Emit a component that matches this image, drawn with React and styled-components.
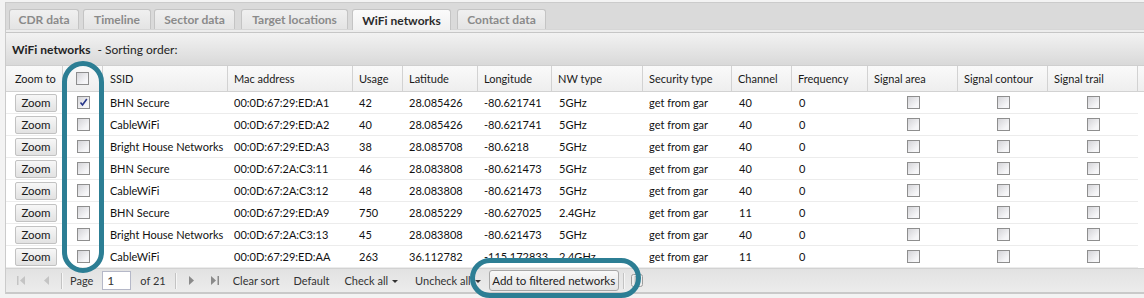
import React from 'react';
import styled, { createGlobalStyle } from 'styled-components';

const GlobalStyle = createGlobalStyle`
  html, body {
    margin: 0;
    padding: 0;
    background: #ffffff;
  }

  body {
    font-family: Lato, "Liberation Sans", sans-serif;
    font-size: 11px;
    color: #111;
  }
`;

const COLUMNS = '57px 40px 125px 125px 50px 75px 74px 91px 89px 60px 76px 90px 90px 90px';

const Page = styled.div`
  position: relative;
  width: 1144px;
  height: 298px;
  overflow: hidden;
  background: #f3f3f3;
`;

const Panel = styled.div`
  margin: 2px 0 0 5px;
  border-top: 1px solid #cbcbcb;
  border-left: 1px solid #cbcbcb;
  background: #ffffff;
`;

const TabBar = styled.div`
  display: flex;
  align-items: flex-end;
  height: 26px;
  background: #dadada;
`;

const Tab = styled.div`
  display: flex;
  align-items: center;
  justify-content: center;
  box-sizing: border-box;
  width: ${ (p) => p.w }px;
  height: ${ (p) => (p.active ? 21 : 20) }px;
  margin-left: ${ (p) => p.gap }px;
  margin-bottom: ${ (p) => (p.active ? -1 : 0) }px;
  border: 1px solid #c4c4c4;
  border-bottom: none;
  border-radius: 3px 3px 0 0;
  background: ${ (p) => (p.active
    ? 'linear-gradient(#fbfbfb, #f1f1f1)'
    : 'linear-gradient(#f0f0f0, #e4e4e4)') };
  color: ${ (p) => (p.active ? '#2b2b2b' : '#8a8a8a') };
  font-weight: 700;
  font-size: 12px;
  white-space: nowrap;
  position: relative;
  z-index: 1;
`;

const TabStrip = styled.div`
  height: 2px;
  background: #ededed;
  border-top: 1px solid #d6d6d6;
  border-bottom: 1px solid #c6c6c6;
`;

const TitleBar = styled.div`
  display: flex;
  align-items: center;
  height: 32px;
  padding-left: 6px;
  background: linear-gradient(#f2f2f2, #d9d9d9);
  border-bottom: 1px solid #cfcfcf;
  color: #222;
  font-size: 12px;

  b {
    margin-right: 7px;
  }
`;

const Row = styled.div`
  display: grid;
  grid-template-columns: ${ COLUMNS } 1fr;
  height: ${ (p) => p.height }px;
  box-sizing: border-box;
`;

const HeaderRow = styled(Row)`
  background: linear-gradient(#fafafa, #eeeeee);
  border-bottom: 1px solid #d2d2d2;
`;

const HeadCell = styled.div`
  display: flex;
  align-items: center;
  justify-content: ${ (p) => (p.center ? 'center' : 'flex-start') };
  padding-left: ${ (p) => (p.center ? 0 : p.pad ?? 6) }px;
  border-right: ${ (p) => (p.last ? 'none' : '1px solid #d2d2d2') };
  color: #1a1a1a;
  white-space: nowrap;
  overflow: hidden;
`;

const BodyRow = styled(Row)`
  background: #ffffff;
`;

const Cell = styled.div`
  display: flex;
  align-items: center;
  justify-content: ${ (p) => (p.center ? 'center' : 'flex-start') };
  padding-left: ${ (p) => (p.center ? 0 : p.pad ?? 7) }px;
  border-bottom: ${ (p) => (p.filler ? 'none' : '1px solid #ececec') };
  white-space: nowrap;
  overflow: hidden;
`;

const ZoomButton = styled.div`
  display: flex;
  align-items: center;
  justify-content: center;
  width: 40px;
  height: 16px;
  border: 1px solid #c2c2c2;
  border-radius: 2px;
  background: linear-gradient(#f7f7f7, #e2e2e2);
  color: #1a1a1a;
  font-size: 11.5px;
`;

const Box = styled.div`
  position: relative;
  width: 11px;
  height: 11px;
  border: 1px solid #8e8e8e;
  background: linear-gradient(135deg, #d4d4d8, #f6f6f8 75%);
`;

const Toolbar = styled.div`
  display: flex;
  align-items: center;
  height: 23px;
  border-top: 1px solid #d2d2d2;
  border-bottom: 2px solid #c9c9c9;
  background: linear-gradient(#e2e2e2, #ececec);
  color: #333;
  font-size: 11px;
  white-space: nowrap;
`;

const Separator = styled.span`
  width: 1px;
  height: 16px;
  margin-left: ${ (p) => p.at }px;
  background: #c3c3c3;
  border-right: 1px solid #f6f6f6;
`;

const PagerButton = styled.span`
  display: flex;
  align-items: center;
  margin-left: ${ (p) => p.at }px;
`;

const ToolText = styled.span`
  margin-left: ${ (p) => p.at }px;
  color: #333;
`;

const PageInput = styled.div`
  box-sizing: border-box;
  width: 29px;
  height: 19px;
  margin-left: 9px;
  padding-left: 4px;
  border: 1px solid #b5b8c8;
  background: #ffffff;
  font-size: 12px;
  line-height: 17px;
`;

const Caret = styled.span`
  display: inline-block;
  margin-left: 4px;
  vertical-align: 2px;
  border-left: 3px solid transparent;
  border-right: 3px solid transparent;
  border-top: 3px solid #333;
`;

const ToolButton = styled.div`
  display: flex;
  align-items: center;
  justify-content: center;
  box-sizing: border-box;
  width: 130px;
  height: 21px;
  margin-left: ${ (p) => p.at }px;
  border: 1px solid #a7a7a7;
  border-radius: 3px;
  background: linear-gradient(#f8f8f8, #e4e4e4);
  color: #222;
  font-size: 11.5px;
`;

const Highlight = styled.div`
  position: absolute;
  left: ${ (p) => p.x }px;
  top: ${ (p) => p.y }px;
  width: ${ (p) => p.w }px;
  height: ${ (p) => p.h }px;
  box-sizing: border-box;
  border: 5px solid #2c7e94;
  border-radius: ${ (p) => p.r }px;
  pointer-events: none;
`;

const headers = ['Zoom to', '', 'SSID', 'Mac address', 'Usage', 'Latitude', 'Longitude', 'NW type',
  'Security type', 'Channel', 'Frequency', 'Signal area', 'Signal contour', 'Signal trail'];

const rows = [
  ['BHN Secure', '00:0D:67:29:ED:A1', '42', '28.085426', '-80.621741', '5GHz', '40', true],
  ['CableWiFi', '00:0D:67:29:ED:A2', '40', '28.085426', '-80.621741', '5GHz', '40'],
  ['Bright House Networks', '00:0D:67:29:ED:A3', '38', '28.085708', '-80.6218', '5GHz', '40'],
  ['BHN Secure', '00:0D:67:2A:C3:11', '46', '28.083808', '-80.621473', '5GHz', '40'],
  ['CableWiFi', '00:0D:67:2A:C3:12', '48', '28.083808', '-80.621473', '5GHz', '40'],
  ['BHN Secure', '00:0D:67:29:ED:A9', '750', '28.085229', '-80.627025', '2.4GHz', '11'],
  ['Bright House Networks', '00:0D:67:2A:C3:13', '45', '28.083808', '-80.621473', '5GHz', '40'],
  ['CableWiFi', '00:0D:67:29:ED:AA', '263', '36.112782', '-115.172833', '2.4GHz', '11'],
];

// label, gap before the tab, tab width
const tabs = [
  ['CDR data', 3, 70],
  ['Timeline', 4, 68],
  ['Sector data', 3, 81],
  ['Target locations', 6, 107],
  ['WiFi networks', 4, 99],
  ['Contact data', 6, 89],
];

function Checkbox({ checked }) {
  return (
    <Box>
      {checked && (
        <svg width="11" height="11" viewBox="0 0 11 11" style={{ position: 'absolute', left: 0, top: 0 }}>
          <path d="M2.5 5.5 L4.5 8 L8.8 2" fill="none" stroke="#27368a" strokeWidth="1.6" />
        </svg>
      )}
    </Box>
  );
}

function PagerIcon({ dir, bar, color }) {
  const tri = dir === 'left' ? 'M9 2 L4 6.5 L9 11 Z' : 'M2 2 L7 6.5 L2 11 Z';
  return (
    <svg width="11" height="13" viewBox="0 0 11 13">
      <path d={tri} fill={color} />
      {bar && <rect x={dir === 'left' ? 1 : 8.5} y="2" width="1.5" height="9" fill={color} />}
    </svg>
  );
}

export default function App() {
  return (
    <>
      <GlobalStyle />
      <Page>
        <Panel>
          <TabBar>
            {tabs.map(([t, gap, w]) => (
              <Tab key={t} gap={gap} w={w} active={t === 'WiFi networks'}>{t}</Tab>
            ))}
          </TabBar>
          <TabStrip />
          <TitleBar>
            <b>WiFi networks</b> - Sorting order:
          </TitleBar>
          <HeaderRow height={26}>
            {headers.map((h, i) => (
              <HeadCell key={i} center={i === 1} pad={i === 0 ? 9 : i === 2 ? 7 : 6}>
                {i === 1 ? <Checkbox /> : h}
              </HeadCell>
            ))}
            <HeadCell last />
          </HeaderRow>
          {rows.map((r, i) => (
            <BodyRow key={i} height={22}>
              <Cell pad={9}><ZoomButton>Zoom</ZoomButton></Cell>
              <Cell center><Checkbox checked={r[7]} /></Cell>
              <Cell>{r[0]}</Cell>
              <Cell pad={6}>{r[1]}</Cell>
              <Cell pad={6}>{r[2]}</Cell>
              <Cell pad={6}>{r[3]}</Cell>
              <Cell pad={6}>{r[4]}</Cell>
              <Cell pad={7}>{r[5]}</Cell>
              <Cell pad={6}>get from gar</Cell>
              <Cell pad={7}>{r[6]}</Cell>
              <Cell pad={7}>0</Cell>
              <Cell center><Checkbox /></Cell>
              <Cell center><Checkbox /></Cell>
              <Cell center><Checkbox /></Cell>
              <Cell filler />
            </BodyRow>
          ))}
          <Toolbar>
            <PagerButton at={10}><PagerIcon dir="left" bar color="#c4c4c4" /></PagerButton>
            <PagerButton at={13}><PagerIcon dir="left" color="#c4c4c4" /></PagerButton>
            <Separator at={10} />
            <ToolText at={7}>Page</ToolText>
            <PageInput>1</PageInput>
            <ToolText at={9}>of 21</ToolText>
            <Separator at={9} />
            <PagerButton at={10}><PagerIcon dir="right" color="#8a8a8a" /></PagerButton>
            <PagerButton at={11}><PagerIcon dir="right" bar color="#8a8a8a" /></PagerButton>
            <ToolText at={13}>Clear sort</ToolText>
            <ToolText at={14}>Default</ToolText>
            <ToolText at={15}>Check all<Caret /></ToolText>
            <ToolText at={17}>Uncheck all<Caret /></ToolText>
            <ToolButton at={8}>Add to filtered networks</ToolButton>
            <Separator at={4} />
            <PagerButton at={5}>
              <svg width="14" height="15" viewBox="0 0 14 15">
                <rect x="1.5" y="1.5" width="11" height="12" rx="2" fill="#eeeeee" stroke="#9c9c9c" />
                <rect x="5" y="3.5" width="4" height="8" fill="#cfcfcf" stroke="#a8a8a8" strokeWidth="0.6" />
              </svg>
            </PagerButton>
          </Toolbar>
        </Panel>
        <Highlight x={62} y={61} w={42} h={212} r={21} />
        <Highlight x={470} y={258} w={171} h={40} r={20} />
      </Page>
    </>
  );
}
